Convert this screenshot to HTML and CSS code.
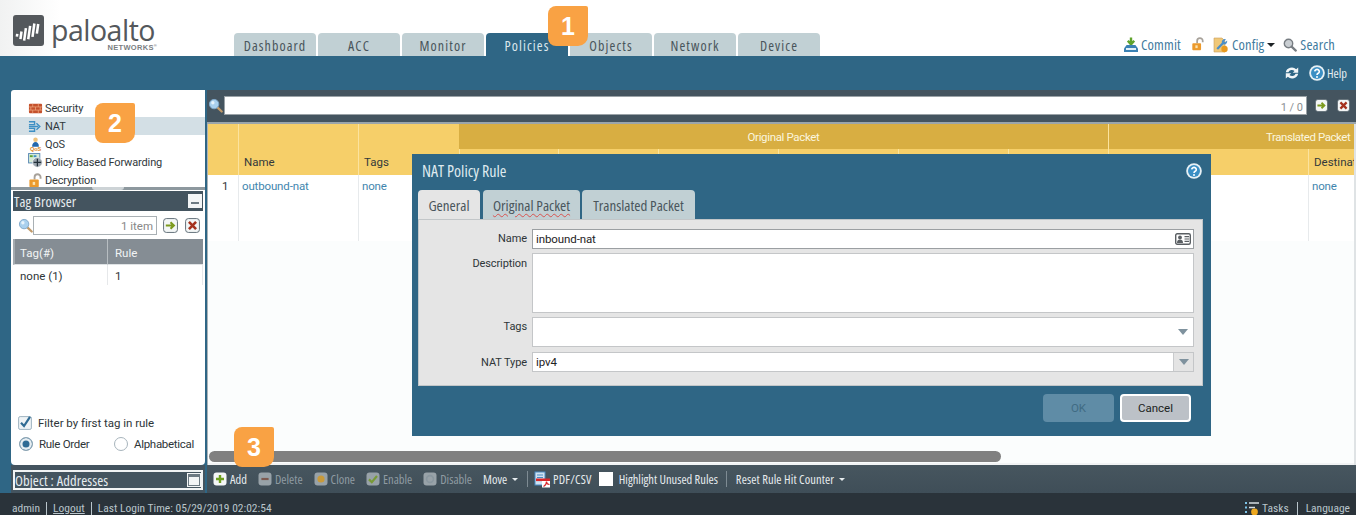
FILE: index.html
```html
<!DOCTYPE html>
<html lang="en">
<head>
<meta charset="utf-8">
<title>NAT Policy Rule</title>
<link rel="stylesheet" href="styles.css">
</head>
<body>
<svg class="defs" width="0" height="0" aria-hidden="true">
  <defs>
    <symbol id="i-help" viewBox="0 0 16 16"><circle cx="8" cy="8" r="7.800" fill="#e8f1f5"/><circle cx="8" cy="8" r="6" fill="#3b8fc4"/><path d="M5.700 6.400a2.300 2.100 0 1 1 3.500 1.900c-.8.500-1.200.8-1.200 1.700" fill="none" stroke="#fff" stroke-width="1.600"/><circle cx="8" cy="12" r="1" fill="#fff"/></symbol>
    <symbol id="i-mag" viewBox="0 0 16 16"><path d="M10 10l4.600 4.400" stroke="#c09a6a" stroke-width="2.400" stroke-linecap="round"/><circle cx="6.500" cy="6.500" r="5" fill="#a9d0ee" stroke="#7fa8c9"/><circle cx="5.200" cy="5" r="1.800" fill="#e6f3fc"/></symbol>
    <symbol id="i-go" viewBox="0 0 16 16"><rect x=".6" y=".6" width="14.800" height="14.800" rx="3" fill="#f3f6f6" stroke="#5d6b74"/><path d="M3 8h7M8 4.600L11.600 8 8 11.400" fill="none" stroke="#7c9a1e" stroke-width="2.200"/></symbol>
    <symbol id="i-clear" viewBox="0 0 16 16"><rect x=".6" y=".6" width="14.800" height="14.800" rx="3" fill="#f3f6f6" stroke="#5d6b74"/><path d="M4.200 4.200l7.600 7.600M11.800 4.200l-7.600 7.600" stroke="#a5321e" stroke-width="2.800"/></symbol>
    <symbol id="i-lock" viewBox="0 0 16 16"><path d="M7 7V4.500a3.200 3.200 0 0 1 6.400 0V6" fill="none" stroke="#a8a29a" stroke-width="2"/><rect x="1.500" y="7" width="10" height="8" rx="1" fill="#ec9a2c"/><rect x="5" y="9.500" width="2.600" height="3.200" fill="#fbe3b0"/></symbol>
    <symbol id="i-btn" viewBox="0 0 14 14"><rect x=".5" y=".5" width="13" height="13" rx="3" fill="currentColor"/></symbol>
  </defs>
</svg>

<div class="app">
  <header class="top">
    <div class="logo">
      <svg class="logo-mark" viewBox="0 0 32 32" aria-hidden="true"><rect width="32" height="32" rx="3" fill="#54585c"/><path d="M5 21v3M9 18v8M13 14v13M17 11v14M21 8v14M25 8v10" stroke="#fff" stroke-width="2.600" transform="rotate(8 16 16)"/></svg>
      <div class="logo-words"><span class="logo-name">paloalto</span><span class="logo-sub">NETWORKS<sup>®</sup></span></div>
    </div>
    <nav class="tabs">
      <a class="tab">Dashboard</a><a class="tab">ACC</a><a class="tab">Monitor</a><a class="tab tab-on">Policies</a><a class="tab">Objects</a><a class="tab">Network</a><a class="tab">Device</a>
    </nav>
    <div class="top-links">
      <span class="top-link"><svg class="ic16" viewBox="0 0 16 16"><path d="M8 .5v5M4.800 3.800L8 7.400l3.200-3.600" fill="none" stroke="#5fa32c" stroke-width="2.400"/><path d="M3.600 8h8.800l2.600 3.600v3.400H1v-3.400z" fill="#3b82b4"/><rect x="3" y="11" width="10" height="2" fill="#e2f0f8"/></svg>Commit</span>
      <svg class="ic-lock" aria-hidden="true"><use href="#i-lock"/></svg>
      <span class="top-link tl-config"><svg class="ic16" viewBox="0 0 16 16"><path d="M1 1h8l3 3v11H1z" fill="#f0c878" stroke="#c9a05a" stroke-width=".6"/><path d="M13 2.400l-1.800 1.900 1 1 1.900-1.800a3 3 0 0 1-3.600 3.800L5 12.800 3.400 11.200l5.400-5.500A3 3 0 0 1 13 2.400z" fill="#4c8fc7"/><circle cx="11.500" cy="12" r="3.200" fill="#e89a1f"/></svg>Config<i class="caret-blk"></i></span>
      <span class="top-link tl-search"><svg class="ic14" viewBox="0 0 14 14"><circle cx="5.500" cy="5.500" r="4.200" fill="#c9ced2" stroke="#777d82" stroke-width="1.400"/><path d="M8.600 8.600l4.200 4" stroke="#777d82" stroke-width="2.200" stroke-linecap="round"/></svg>Search</span>
    </div>
  </header>

  <div class="band">
    <svg class="ic-refresh" viewBox="0 0 14 14"><path d="M.8 6.200a6.200 5.800 0 0 1 10.400-3L13.200 1.400v5.400H7.800l1.700-1.800A3.700 3.300 0 0 0 3.400 6.200zM13.200 7.800a6.200 5.800 0 0 1-10.400 3L.8 12.600V7.200h5.400L4.500 9a3.700 3.300 0 0 0 6.100-1.200z" fill="#f1f5f7"/></svg>
    <svg class="ic-help"><use href="#i-help"/></svg>
    <span class="band-help">Help</span>
  </div>

  <div class="work">
    <aside class="side">
      <ul class="rules">
        <li class="rule"><svg class="ic16" viewBox="0 0 16 16"><rect x="1" y="3" width="14" height="10" rx="1" fill="#c4512c"/><path d="M1 6.300h14M1 9.700h14M5 3v3.300M11 3v3.300M3 6.300v3.400M8 6.300v3.400M13 6.300v3.400M5 9.700V13M11 9.700V13" stroke="#eda57e" stroke-width=".8"/></svg>Security</li>
        <li class="rule rule-on"><svg class="ic16" viewBox="0 0 16 16"><path d="M1 3h6v3H1M1 8h6M1 13h6v-3H1M7 8h4M9 4.600L12.600 8 9 11.400" fill="none" stroke="#3d8fc4" stroke-width="1.500"/></svg>NAT</li>
        <li class="rule"><svg class="ic16" viewBox="0 0 16 16"><circle cx="8" cy="3" r="2.400" fill="#f0c37c"/><path d="M4.400 10.400C4.400 7 6 5.400 8 5.400s3.600 1.600 3.600 5z" fill="#2468ac"/><text class="qos" x="8" y="15.400">QoS</text></svg>QoS</li>
        <li class="rule"><svg class="ic16 ic-up" viewBox="0 0 16 16"><rect x=".6" y=".6" width="12" height="10" fill="#d6ecd8" stroke="#5a88b4"/><rect x="2" y="2.400" width="3" height="2" fill="#5fa32c"/><rect x="6" y="2.400" width="3" height="2" fill="#3d8fc4"/><circle cx="10" cy="10" r="5.200" fill="#9aa4ad" stroke="#fff" stroke-width=".6"/><path d="M6 10h8M10 6v8" stroke="#22303a" stroke-width="1.300"/></svg>Policy Based Forwarding</li>
        <li class="rule"><svg class="ic16"><use href="#i-lock"/></svg>Decryption</li>
      </ul>
      <div class="split"><i class="split-grip"></i></div>

      <section class="tagbox">
        <div class="bar-title">Tag Browser<span class="win-btn win-min"></span></div>
        <div class="tag-search">
          <svg class="ic15"><use href="#i-mag"/></svg>
          <div class="tag-input">1 item</div>
          <svg class="ic15 tag-go"><use href="#i-go"/></svg>
          <svg class="ic15"><use href="#i-clear"/></svg>
        </div>
        <div class="tag-grid">
          <div class="tag-h tag-c1">Tag(#)</div><div class="tag-h">Rule</div>
          <div class="tag-d tag-c1">none (1)</div><div class="tag-d">1</div>
        </div>
        <div class="tag-filter">
          <div class="chk-row"><svg class="ic14" viewBox="0 0 14 14"><rect x=".6" y=".6" width="12.800" height="12.800" rx="1.500" fill="#eef3f6" stroke="#9eb3c1"/><path d="M3 6.800l3 3.200 6-9.200" fill="none" stroke="#2f6b94" stroke-width="2.200"/></svg>Filter by first tag in rule</div>
          <div class="radio-row">
            <span class="radio radio-on"></span><span class="radio-a">Rule Order</span>
            <span class="radio"></span><span>Alphabetical</span>
          </div>
        </div>
      </section>
      <div class="objbar"><div class="bar-title bar-obj">Object : Addresses<span class="win-btn win-max"></span></div></div>
    </aside>

    <main class="content">
      <div class="findbar">
        <svg class="ic15"><use href="#i-mag"/></svg>
        <div class="find-input">1 / 0</div>
        <svg class="ic13 find-go"><use href="#i-go"/></svg>
        <svg class="ic13 find-x"><use href="#i-clear"/></svg>
      </div>

      <div class="table">
        <div class="thead">
          <div class="th th-tall"></div>
          <div class="th th-tall">Name</div>
          <div class="th th-tall">Tags</div>
          <div class="th-group th-orig">Original Packet</div>
          <div class="th-group th-trans">Translated Packet</div>
          <div class="th th-sub"></div><div class="th th-sub"></div><div class="th th-sub"></div><div class="th th-sub"></div><div class="th th-sub"></div><div class="th th-sub"></div>
          <div class="th th-sub"></div>
          <div class="th th-sub">Destination</div>
        </div>
        <div class="trow">
          <div class="td td-num">1</div>
          <div class="td td-link">outbound-nat</div>
          <div class="td td-link">none</div>
          <div class="td"></div><div class="td"></div><div class="td"></div><div class="td"></div><div class="td"></div><div class="td"></div><div class="td"></div>
          <div class="td td-link">none</div>
        </div>
        <div class="scroll"><div class="thumb"></div></div>
      </div>

      <div class="tools">
        <span class="tool tool-on"><svg class="ic14 c-white" viewBox="0 0 14 14"><use href="#i-btn"/><path d="M7 3v8M3 7h8" stroke="#6ea01f" stroke-width="2.400"/></svg>Add</span>
        <span class="tool"><svg class="ic14 c-grey" viewBox="0 0 14 14"><use href="#i-btn"/><path d="M3.400 7h7.200" stroke="#7d5a50" stroke-width="2.200"/></svg>Delete</span>
        <span class="tool"><svg class="ic14 c-grey" viewBox="0 0 14 14"><use href="#i-btn"/><circle cx="7" cy="7" r="3.600" fill="#c89a3a"/></svg>Clone</span>
        <span class="tool"><svg class="ic14 c-grey" viewBox="0 0 14 14"><use href="#i-btn"/><path d="M3 7.400l2.800 2.800L11 4" fill="none" stroke="#789a36" stroke-width="2.200"/></svg>Enable</span>
        <span class="tool"><svg class="ic14 c-grey" viewBox="0 0 14 14"><use href="#i-btn"/><circle cx="7" cy="7" r="3.400" fill="none" stroke="#8a979f" stroke-width="1.600"/></svg>Disable</span>
        <span class="tool tool-on tool-move">Move<i class="caret-w"></i></span>
        <i class="vsep vsep-a"></i>
        <span class="tool tool-on tool-pdf"><svg class="ic-pdf" viewBox="0 0 17 17"><rect x="1" y="1" width="10" height="13" fill="#cfe2f2" stroke="#4a8ac2"/><path d="M3 4h6M3 6.500h6" stroke="#4a8ac2"/><rect x="2" y="7.500" width="14" height="2.600" fill="#d8262a"/><path d="M8 10h8v6.500H8z" fill="#fff"/><path d="M9.500 15.500c2-1 3-3 3-5 0 2 1.500 3 3 3" fill="none" stroke="#d8262a" stroke-width="1.200"/></svg>PDF/CSV</span>
        <span class="wbox"></span>
        <span class="tool tool-on tool-hl">Highlight Unused Rules</span>
        <i class="vsep vsep-b"></i>
        <span class="tool tool-on tool-reset">Reset Rule Hit Counter<i class="caret-w"></i></span>
      </div>
    </main>
  </div>

  <footer class="foot">
    <span>admin</span><i class="fsep"></i><span class="under">Logout</span><i class="fsep"></i><span>Last Login Time: 05/29/2019 02:02:54</span>
    <span class="foot-right"><svg class="ic16" viewBox="0 0 16 16"><path d="M1 2h2v2H1zM1 6.500h2v2H1zM1 11h2v2H1z" fill="#7cc4e8"/><path d="M5 3h10M5 7.500h6" stroke="#d5dde2" stroke-width="1.300"/><circle cx="10.500" cy="12" r="3.400" fill="#eda81f"/></svg>Tasks<i class="fsep"></i>Language</span>
  </footer>

  <div class="dialog">
    <div class="dlg-head">NAT Policy Rule<svg class="ic-help"><use href="#i-help"/></svg></div>
    <div class="dlg-tabs">
      <span class="dtab dtab-on">General</span><span class="dtab dtab-b"><span class="squiggle">Original Packet</span></span><span class="dtab dtab-c">Translated Packet</span>
    </div>
    <form class="dlg-form">
      <label class="lab">Name</label>
      <div class="field f-name"><span>inbound-nat</span><svg class="ic-card" viewBox="0 0 16 12"><rect x=".7" y=".7" width="14.600" height="10.600" rx="1.500" fill="#fff" stroke="#5a5f63" stroke-width="1.400"/><circle cx="5" cy="4.400" r="1.900" fill="#5a5f63"/><path d="M2 10c0-2.400 1.300-3.400 3-3.400S8 7.600 8 10z" fill="#5a5f63"/><path d="M9.500 3.600h4.500M9.500 6h4.500M9.500 8.400h4.500" stroke="#5a5f63" stroke-width="1.200"/></svg></div>
      <label class="lab lab-desc">Description</label>
      <div class="field f-desc"></div>
      <label class="lab">Tags</label>
      <div class="field f-tags"><i class="tri"></i></div>
      <label class="lab lab-type">NAT Type</label>
      <div class="field f-type"><span>ipv4</span><span class="drop"><i class="tri"></i></span></div>
    </form>
    <div class="dlg-actions"><span class="btn btn-ok">OK</span><span class="btn btn-cancel">Cancel</span></div>
  </div>

  <div class="badge badge-1">1</div>
  <div class="badge badge-2">2</div>
  <div class="badge badge-3">3</div>
</div>
</body>
</html>
```
FILE: styles.css
```css
* { box-sizing: border-box; }
html, body { margin: 0; padding: 0; background: #2f6685; }
body { font-family: Roboto, "Liberation Sans", sans-serif; font-size: 11.5px; color: #2e3538; }
.defs { position: absolute; }
ul { list-style: none; margin: 0; padding: 0; }
svg { display: block; flex: none; }
.ic13 { width: 13px; height: 13px; }
.ic14 { width: 14px; height: 14px; }
.ic15 { width: 15px; height: 15px; }
.ic16 { width: 16px; height: 16px; }

.app { position: relative; width: 1356px; height: 515px; overflow: hidden; display: flex; flex-direction: column; background: #2f6685; }

/* condensed face shared by the chrome labels */
.tab, .top-links, .band-help, .bar-title, .tools, .dlg-head, .dtab { font-family: "Open Sans", Roboto, sans-serif; font-stretch: 75%; }

/* header */
.top { height: 56px; flex: none; display: flex; background: linear-gradient(90deg, #f1f2f2, #fff 60px); padding-left: 13px; }
.logo { width: 221px; flex: none; display: flex; gap: 7px; padding-top: 15px; }
.logo-mark { width: 31px; height: 31px; }
.logo-words { display: flex; flex-direction: column; align-items: flex-end; width: 106px; }
.logo-name { font-family: "Open Sans", sans-serif; font-size: 28.500px; line-height: 26px; letter-spacing: -.5px; color: #54585c; width: 100%; white-space: nowrap; margin-top: 2px; }
.logo-sub { font-family: "Liberation Sans", sans-serif; font-size: 7.500px; font-weight: 700; letter-spacing: .3px; color: #7a7e82; line-height: 7px; margin-top: 1px; }
.logo-sub sup { font-size: 4px; line-height: 0; vertical-align: 3px; }
.tabs { display: flex; gap: 2px; align-items: flex-end; }
.tab { width: 82px; height: 23px; line-height: 25px; text-align: center; background: #c1d0d4; color: #49555b; border-radius: 4px 4px 0 0; font-size: 14px; letter-spacing: 1.1px; }
.tab-on { background: #2f6685; color: #dce8ee; }
.top-links { display: flex; align-items: flex-end; margin-left: auto; padding: 0 21px 3px 0; color: #3f7b9e; font-size: 14.500px; letter-spacing: .15px; }
.top-link { display: flex; align-items: center; gap: 2px; height: 17px; }
.ic-lock { width: 14px; height: 14px; margin: 0 8px 2px 10px; }
.tl-config { gap: 3px; }
.tl-search { margin-left: 8px; gap: 3px; }
.caret-blk { display: block; width: 0; height: 0; border: 4px solid transparent; border-top: 4px solid #1d2225; border-bottom: 0; }

/* blue band */
.band { height: 34px; flex: none; display: flex; align-items: center; justify-content: flex-end; padding: 0 9px 0 0; color: #e6eef2; }
.ic-refresh { width: 14px; height: 14px; margin-right: 10px; }
.ic-help { width: 16px; height: 16px; }
.band-help { margin-left: 2px; font-size: 12.500px; }

/* work area */
.work { flex: 1; min-height: 0; display: flex; padding-left: 11px; }
.side { width: 194px; flex: none; display: flex; flex-direction: column; }
.rules { height: 97px; flex: none; background: #fff; padding-top: 9px; border-radius: 3px 0 0 0; overflow: hidden; }
.rule { height: 18px; display: flex; align-items: center; gap: 1px; padding-left: 17px; color: #30383c; font-size: 11px; letter-spacing: -.15px; }
.rule .ic16 { width: 15px; height: 15px; margin-right: 1px; }
.rule .ic-up { margin-top: -3px; }
.rule-on { background: #d3dfe5; }
.qos { font: 700 6px "Liberation Sans", sans-serif; fill: #e08a1e; text-anchor: middle; }
.split { height: 3px; flex: none; background: #8d989e; display: flex; justify-content: center; }
.split-grip { width: 32px; height: 3px; background: #cdd3d6; border-radius: 0 0 8px 8px; }

.tagbox { height: 275px; flex: none; background: #fff; display: flex; flex-direction: column; padding: 1px 2px 0; border-radius: 0 0 4px 4px; }
.bar-title { height: 20px; flex: none; background: #44545f; color: #e6ecef; font-size: 14.500px; letter-spacing: .1px; padding-left: 1px; display: flex; justify-content: space-between; align-items: center; }
.win-btn { width: 14px; height: 14px; background: #f3f5f6; margin-right: 1px; display: flex; align-items: center; justify-content: center; }
.win-min::after { content: ""; width: 8px; height: 2px; background: #6d7a83; margin-top: 3px; }
.win-max::after { content: ""; width: 10px; height: 8px; border: 1px solid #6d7a83; border-top-width: 3px; }
.tag-search { height: 28px; flex: none; display: flex; align-items: center; padding-left: 5px; background: #fff; }
.tag-input { width: 124px; height: 19px; border: 1px solid #a9b0b4; text-align: right; padding-right: 3px; line-height: 18px; color: #888; }
.tag-go { margin: 0 7px 0 6px; }
.tag-grid { display: grid; grid-template-columns: 95px 95px; }
.tag-h { height: 26px; background: #858d94; color: #f2f4f5; line-height: 29px; padding-left: 7px; border-bottom: 1px solid #dfe3e5; }
.tag-c1 { border-right: 1px solid #b7bdc1; border-left: 2px solid #a4abb0; padding-left: 5px; }
.tag-d { height: 20px; line-height: 22px; padding-left: 7px; border-right: 1px solid #e6e8ea; }
.tag-d.tag-c1 { border-left: 0; padding-left: 7px; }
.tag-filter { margin-top: auto; padding: 0 5px 13px; color: #2e3538; }
.chk-row { display: flex; align-items: center; gap: 6px; height: 16px; letter-spacing: -.03px; }
.radio-row { display: flex; align-items: center; height: 16px; margin-top: 5px; padding-left: 1px; letter-spacing: -.3px; }
.radio { width: 14px; height: 14px; border-radius: 50%; border: 1px solid #a7b4bc; background: #fff; margin-right: 6px; flex: none; }
.radio-on { background: #2f6b94; box-shadow: inset 0 0 0 2.500px #e7eef2; border-color: #8fa6b4; }
.radio-a { width: 75px; }
.objbar { height: 28px; flex: none; background: #44545f; padding: 5px 2px 3px; }
.bar-obj { border: 2px solid #f1f3f4; padding-left: 0; }
.win-max { margin-right: 0; }

.content { flex: 1; min-width: 0; margin-left: 2px; display: flex; flex-direction: column; position: relative; }
.findbar { height: 34px; flex: none; background: #44545f; display: flex; align-items: center; padding: 0 6px 2px 1px; border-bottom: 2px solid #9aa5ab; }
.find-input { flex: 1; height: 19px; background: #fff; border: 1px solid #9aa2a7; margin-left: 1px; text-align: right; padding-right: 3px; color: #8b8f92; line-height: 21px; font-size: 11px; }
.find-go { margin: 0 9px 0 8px; }

.table { flex: 1; min-height: 0; background: #fbfdfd; display: flex; flex-direction: column; overflow: hidden; border-left: 1px solid #aab3b8; border-right: 2px solid #dfe3e5; }
.thead, .trow { width: 1240px; display: grid; grid-template-columns: 30px 120px 101px 99px 100px 120px 120px 110px 100px 200px 140px; flex: none; }
.thead { grid-template-rows: 25px 26px; background: #f6cf69; height: 51px; }
.th { border-left: 1px solid #fbe39e; color: #33393b; padding-left: 5px; }
.th:first-child { border-left: 0; }
.th-tall { grid-row: 1 / 3; padding-top: 31px; }
.th-sub { line-height: 27px; }
.th-group { background: #d8ae42; color: #fbf6df; line-height: 26px; text-align: center; letter-spacing: -.35px; }
.th-orig { grid-column: 4 / 10; }
.th-trans { grid-column: 10 / 12; text-align: left; padding-left: 157px; border-left: 1px solid #fbe39e; letter-spacing: -.45px; }
.trow { height: 66px; background: #fff; }
.td { border-left: 1px solid #e7eaec; padding: 4px 0 0 3px; line-height: 14px; }
.td:first-child { border-left: 0; }
.td-num { padding-left: 14px; }
.td-link { color: #3f86ae; letter-spacing: -.15px; }
.scroll { margin-top: auto; height: 16px; flex: none; padding: 2px 1px 0; border-bottom: 2px solid #f1f3f4; background: #fbfdfd; }
.thumb { width: 792px; height: 11px; background: #808080; border-radius: 6px; }

.tools { height: 28px; flex: none; display: flex; align-items: center; background: linear-gradient(#47565f, #3f4e58); padding-left: 6px; color: #8f9ba2; font-size: 12.500px; }
.tool { display: flex; align-items: center; gap: 3px; margin-right: 11px; white-space: nowrap; }
.tool-on { color: #e6ebee; }
.c-white { color: #f4f6f7; }
.c-grey { color: #98a2a8; }
.tool-move { margin-right: 9px; }
.caret-w { display: block; width: 0; height: 0; border: 3px solid transparent; border-top: 3px solid #e6ebee; border-bottom: 0; margin-left: 2px; }
.vsep { width: 1px; height: 16px; background: #7e8b93; flex: none; }
.vsep-a { margin-right: 6px; }
.vsep-b { margin: 0 9px 0 0; }
.ic-pdf { width: 17px; height: 17px; }
.tool-pdf { gap: 2px; margin-right: 7px; letter-spacing: .2px; }
.wbox { width: 14px; height: 14px; background: #fff; flex: none; margin-right: 6px; }
.tool-hl { margin-right: 8px; }
.tool-reset { letter-spacing: .1px; }

/* footer */
.foot { height: 22px; flex: none; background: #2a333a; color: #b9c5cb; display: flex; align-items: center; padding: 8px 6px 0 12px; font-family: Roboto, sans-serif; font-stretch: 75%; font-size: 11.500px; line-height: 14px; }
.fsep { width: 1px; height: 13px; background: #b9c5cb; margin: 0 6px; flex: none; }
.under { text-decoration: underline; }
.foot-right { margin-left: auto; display: flex; align-items: center; gap: 2px; }

/* dialog */
.dialog { position: absolute; left: 412px; top: 154px; width: 799px; height: 282px; background: #2f6685; padding: 0 8px 0 6px; display: flex; flex-direction: column; }
.dlg-head { height: 36px; flex: none; display: flex; justify-content: space-between; align-items: center; color: #dfeaef; font-size: 16px; padding: 0 1px 2px 4px; }
.dlg-tabs { display: flex; gap: 2px; height: 29px; flex: none; }
.dtab { background: #c1d0d4; color: #4a565c; font-size: 15px; line-height: 31px; text-align: center; border-radius: 4px 4px 0 0; }
.dtab-on { width: 62px; background: #e5e5e5; }
.dtab-b { width: 97px; margin-left: 1px; }
.dtab-c { width: 113px; }
.squiggle { text-decoration: underline wavy #d9534f 1px; text-underline-offset: 2px; }
.dlg-form { height: 167px; flex: none; background: #e5e5e5; border: 1px solid #c2c6c8; display: grid; grid-template-columns: 108px 662px; grid-template-rows: 20px 60px 30px 21px; row-gap: 4px; column-gap: 5px; padding: 9px 0 0; align-content: start; }
.lab { text-align: right; line-height: 19px; color: #2e3538; font-size: 11px; letter-spacing: -.1px; }
.lab-desc { padding-top: 1px; }
.lab-type { padding-top: 2px; }
.field { background: #fff; border: 1px solid #c4c6c8; display: flex; align-items: center; justify-content: space-between; padding-left: 3px; color: #1e2224; letter-spacing: -.1px; }
.f-name { border: 1px solid #9b9fa2; padding-right: 2px; }
.f-tags { padding-right: 5px; justify-content: flex-end; }
.f-type { padding-right: 0; margin-top: 1px; }
.ic-card { width: 16px; height: 12px; }
.drop { width: 20px; height: 100%; background: #e4e4e4; border-left: 1px solid #c9cbcd; display: flex; align-items: center; justify-content: center; }
.tri { display: block; width: 0; height: 0; border: 5.500px solid transparent; border-top: 6px solid #7f929e; border-bottom: 0; }
.dlg-actions { display: flex; justify-content: flex-end; gap: 6px; padding: 8px 12px 0 0; }
.btn { width: 71px; height: 28px; border-radius: 4px; text-align: center; font-size: 11.500px; }
.btn-ok { background: #5f8ca6; color: #3f6b83; line-height: 28px; }
.btn-cancel { background: #bcc1c7; border: 2px solid #fff; color: #1b1f21; line-height: 25px; }

/* numbered callouts */
.badge { position: absolute; width: 40px; height: 40px; background: #f9a244; color: #fff; font: 700 25px/40px "Liberation Sans", sans-serif; text-align: center; border-radius: 8px 2px 10px 8px; }
.badge-1 { left: 548px; top: 6px; }
.badge-2 { left: 95px; top: 103px; }
.badge-3 { left: 234px; top: 427px; }
```
